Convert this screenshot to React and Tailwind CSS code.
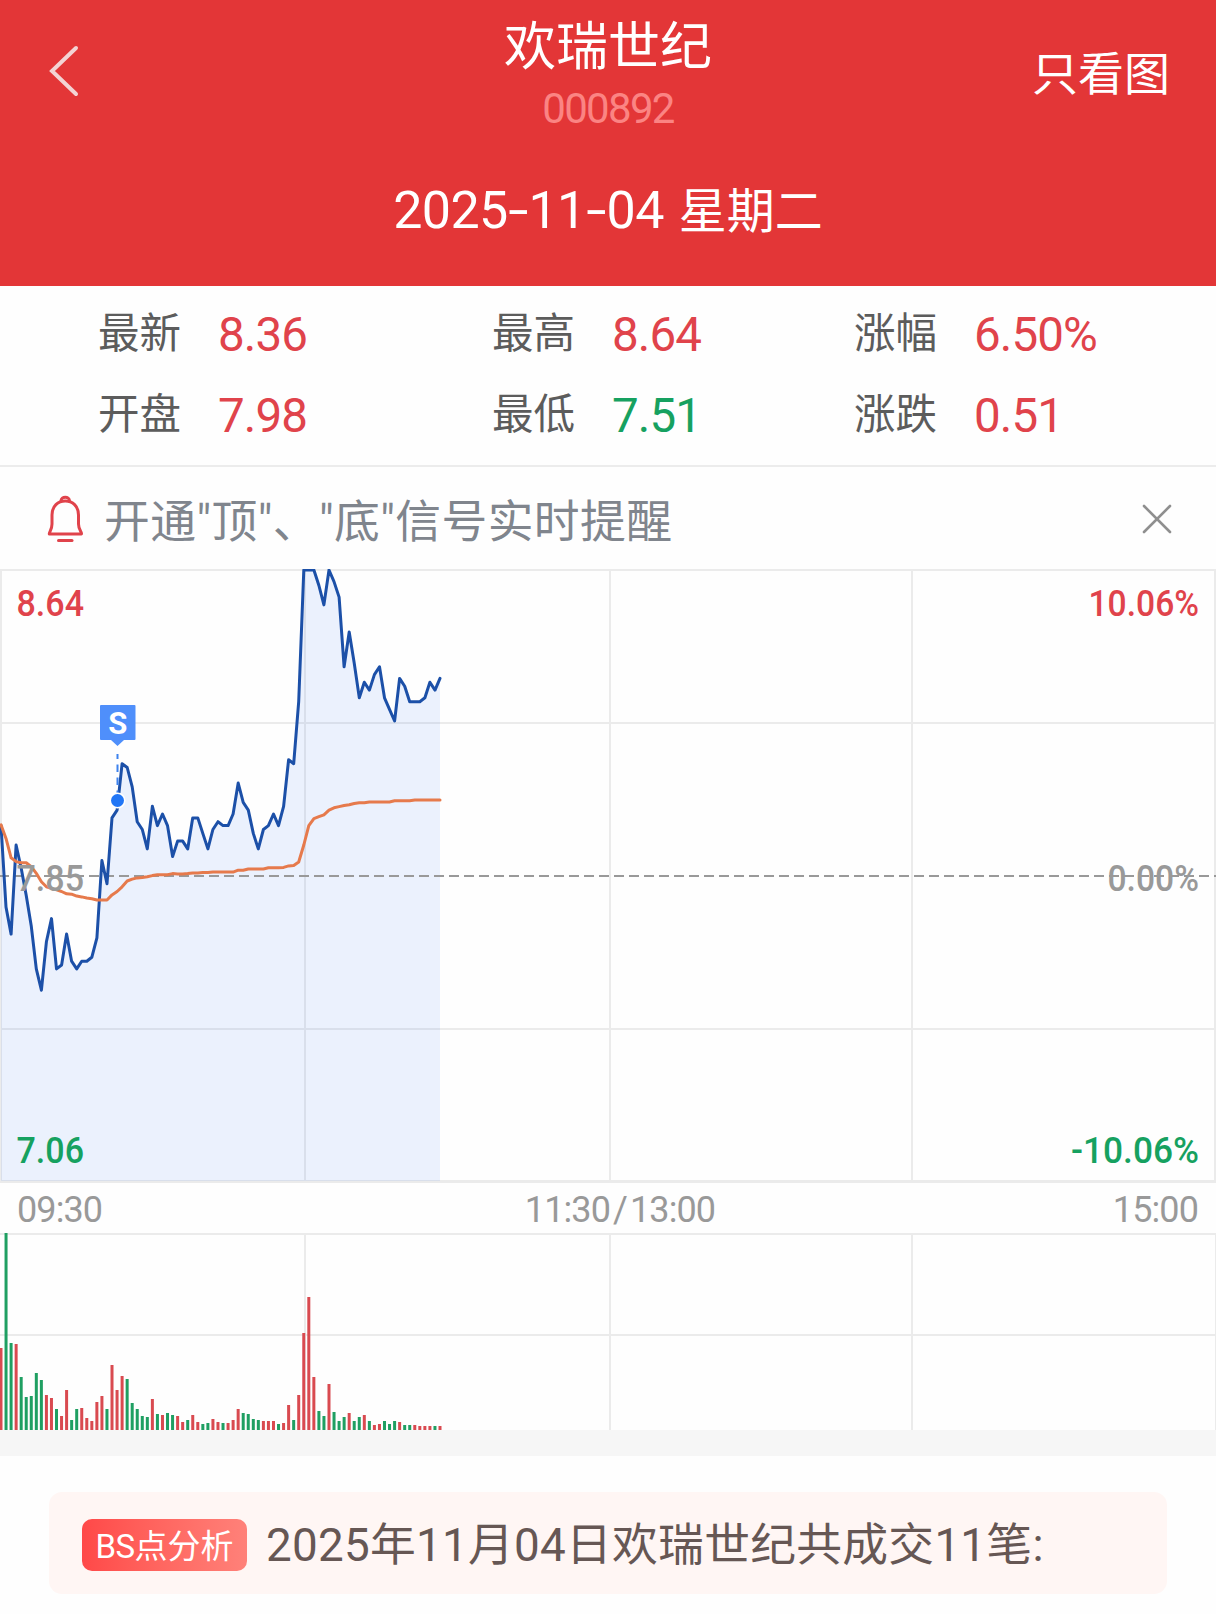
import React from "react";

const RED = "#e0434b";
const GREEN = "#16a160";
const GRID = "#ebebeb";

// Minute prices in cents, starting at 09:30
const prices = [
    798, 777, 770, 793, 787, 780, 772, 761, 755.5, 768, 774, 761, 762, 770, 763, 761, 763, 763, 764, 769, 789, 783,
    800, 802, 814, 813, 808, 799, 797, 792, 803, 798, 801, 798, 790, 794, 794, 792, 800, 800, 796, 792, 797, 799,
    798, 798, 801, 809, 804, 802, 796, 792, 797, 798, 801, 798, 803, 815, 814, 830, 864, 864, 864, 860, 855, 864,
    861, 857, 839, 848, 840, 831, 835, 833, 837, 839, 831, 828, 825, 836, 834, 830, 830, 830, 831, 835, 833, 836,
];

const averages = [
    798.2, 794.7, 789.7, 788.7, 788.4, 788.4, 787.4, 785.7, 783.5, 782.2, 781.8, 781.4, 781, 780.4, 780.3, 779.8,
    779.6, 779.3, 779.1, 778.8, 778.8, 778.8, 780.1, 781, 782.2, 783.7, 784.2, 784.5, 784.6, 784.8, 785.1, 785.3,
    785.3, 785.3, 785.6, 785.5, 785.5, 785.6, 785.8, 785.8, 785.9, 785.9, 786, 786, 786, 786, 786, 786.5, 786.5,
    786.8, 786.8, 786.8, 786.8, 787.1, 787.1, 787.1, 787.2, 787.6, 787.7, 788.6, 793, 798, 799.8, 800.3, 800.8,
    802, 802.6, 802.9, 803.2, 803.4, 803.7, 803.9, 803.9, 804.1, 804.1, 804.1, 804.1, 804.1, 804.4, 804.4, 804.4,
    804.4, 804.6, 804.6, 804.6, 804.6, 804.6, 804.6,
];

// Negative values are minutes that closed lower
const volumes = [
    82, -197, -87, 86, -53, -33, -34, -57, -50, 35, 32, -21, 14, 40, -10, -21, 22, 12, 9, 28, 34, -21, 65, 40, 54,
    -51, -27, -21, -14, -13, 31, -16, 15, -17, -15, 14, 8, -10, 15, 8, -6, -7, 11, 8, -7, 7, 10, 21, -17, -16, -11,
    -10, 9, 9, 9, -6, 7, 25, -10, 35, 97, 133, 53, -19, -14, 46, -18, -9, -13, 17, -9, -13, 15, -9, 5, 6, -9, -6,
    -9, 8, -5, -5, 5, 4, 4, 4, -4, 4,
];

const stats = [
    [
        { label: "最新", value: "8.36" },
        { label: "开盘", value: "7.98" },
    ],
    [
        { label: "最高", value: "8.64" },
        { label: "最低", value: "7.51", down: true },
    ],
    [
        { label: "涨幅", value: "6.50%" },
        { label: "涨跌", value: "0.51" },
    ],
];

const toX = (i) => 1 + i * 5.046;
const toY = (cents) => 1 + (864 - cents) * 3.873;
const toPoints = (list) => list.map((v, i) => `${toX(i).toFixed(1)},${toY(v).toFixed(1)}`).join(" ");

const Dash = () => <span className="mx-[3.5px] inline-block scale-x-[1.4]">-</span>;

const Header = () => (
    <header className="h-[286px] bg-[#e33637] text-white">
        <div className="flex h-[144px] justify-between">
            <div className="w-[280px] pl-[46px] pt-[43px]">
                <svg width="36" height="56" viewBox="0 0 36 56" fill="none">
                    <path d="M30 5 L6 28 L30 51" stroke="#f3d3d3" strokeWidth="4" strokeLinecap="round" />
                </svg>
            </div>
            <div className="flex flex-col items-center pt-[18px]">
                <h1 className="text-[52px] leading-[60px]">欢瑞世纪</h1>
                <span className="mt-[7px] text-[42px] leading-[48px] tracking-[-1.7px] text-[#fb8483]">000892</span>
            </div>
            <div className="w-[280px] pr-[46px] pt-[44px] text-right text-[46px] leading-[60px]">只看图</div>
        </div>
        <div className="flex items-baseline justify-center pt-[31px] leading-[72px]">
            <span className="text-[52px] tracking-[-0.6px]">
                2025
                <Dash />
                11
                <Dash />
                04
            </span>
            <span className="ml-[15px] text-[48px]">星期二</span>
        </div>
    </header>
);

const Stats = () => (
    <section className="flex h-[181px] border-b-2 border-[#ececec] pl-[98px] pt-[8px]">
        {stats.map((col, i) => (
            <div key={i} className={i === 0 ? "w-[394px]" : "w-[362px]"}>
                {col.map((s) => (
                    <div key={s.label} className="flex h-[81px] items-center">
                        <span className="w-[120px] text-[41.5px] text-[#5c5c5c]">{s.label}</span>
                        <span
                            className={`pt-[2px] text-[47.5px] tracking-[-0.9px] ${
                                s.down ? "text-[#16a160]" : "text-[#e0434b]"
                            }`}
                        >
                            {s.value}
                        </span>
                    </div>
                ))}
            </div>
        ))}
    </section>
);

const AlertBar = () => (
    <section className="flex h-[102px] items-center justify-between pl-[46px] pr-[43px] pt-[2px]">
        <div className="flex items-center">
            <svg width="40" height="48" viewBox="0 0 40 48" fill="none" stroke={RED} strokeWidth="3" strokeLinecap="round" strokeLinejoin="round">
                <path d="M15 6 C15 1 23.500 1 23.500 6" />
                <path d="M3.300 39 C3 37 6 35 6 29 L6 20 C6 11 12 6 19.300 6 C26.500 6 32.500 11 32.500 20 L32.500 29 C32.500 35 36 37 35.500 39 Z" />
                <path d="M12.500 45.500 H26" />
            </svg>
            <span className="ml-[18px] pt-[7px] text-[45.8px] leading-[60px] tracking-[0.4px] text-[#80858d]">
                开通"顶"、"底"信号实时提醒
            </span>
        </div>
        <svg width="32" height="32" viewBox="0 0 32 32" fill="none" stroke="#8f8f8f" strokeWidth="2.600" strokeLinecap="round">
            <path d="M3 3 L29 29 M29 3 L3 29" />
        </svg>
    </section>
);

const ChartLabel = ({ x, y, width, color, children }) => (
    <text x={x} y={y} textLength={width} lengthAdjust="spacingAndGlyphs" fill={color} fontSize="36" fontWeight="500">
        {children}
    </text>
);

const PriceChart = () => {
    const line = toPoints(prices);
    return (
        <svg width="1216" height="614" viewBox="0 0 1216 614" className="block">
            <g stroke={GRID} strokeWidth="2">
                <path d="M0 1 H1216 M0 154 H1216 M0 460 H1216" />
                <path d="M1 0 V613 M305 0 V613 M610 0 V613 M912 0 V613 M1215 0 V613" />
                <path d="M0 612.500 H1216" strokeWidth="3" />
            </g>
            <polygon points={`1,612 ${line} 440,612`} fill="#2c6ef2" fillOpacity="0.09" />
            <path d="M-1 307 H1216" stroke="#999" strokeWidth="2" strokeDasharray="10 5" />
            <polyline points={line} fill="none" stroke="#1c50a8" strokeWidth="3" strokeLinejoin="round" strokeLinecap="round" />
            <polyline points={toPoints(averages)} fill="none" stroke="#e67a4c" strokeWidth="3" strokeLinejoin="round" strokeLinecap="round" />

            {/* Sell marker */}
            <path d="M117.500 185 V226" stroke="#3d82ee" strokeWidth="2" strokeDasharray="7.500 5.500" strokeDashoffset="2.500" />
            <circle cx="117.500" cy="231.500" r="8" fill="#fff" />
            <circle cx="117.500" cy="231.500" r="6.500" fill="#2176f6" />
            <path d="M101 136 H134.500 Q135.500 136 135.500 137 V170 Q135.500 171 134.500 171 H124 L117.500 177 L111 171 H101 Q100 171 100 170 V137 Q100 136 101 136 Z" fill="#4f8ffb" />
            <text x="117.700" y="164.500" textAnchor="middle" fill="#fff" fontSize="31" fontWeight="700">
                S
            </text>

            <ChartLabel x={16.5} y={47} width={67.5} color={RED}>8.64</ChartLabel>
            <ChartLabel x={16.5} y={322} width={67.5} color="#999">7.85</ChartLabel>
            <ChartLabel x={16.5} y={594} width={67.5} color={GREEN}>7.06</ChartLabel>
            <ChartLabel x={1088.5} y={47} width={110.5} color={RED}>10.06%</ChartLabel>
            <ChartLabel x={1107.5} y={322} width={91.5} color="#999">0.00%</ChartLabel>
            <ChartLabel x={1071} y={594} width={128} color={GREEN}>-10.06%</ChartLabel>
        </svg>
    );
};

const TimeAxis = () => (
    <div className="grid h-[50px] grid-cols-3 items-center px-[17px] pt-[2px] text-[36px] leading-[50px] tracking-[-0.9px] text-[#999]">
        <span>09:30</span>
        <span className="pl-[24px] text-center">
            11:30<span className="mx-[3px]">/</span>13:00
        </span>
        <span className="pr-px text-right">15:00</span>
    </div>
);

const VolumeChart = () => (
    <svg width="1216" height="197" viewBox="0 0 1216 197" className="block">
        <g stroke={GRID} strokeWidth="2">
            <path d="M0 1 H1216 M0 102 H1216" />
            <path d="M305 0 V197 M610 0 V197 M912 0 V197 M1216 0 V197" />
        </g>
        {volumes.map((v, i) => (
            <rect
                key={i}
                x={toX(i) - 1.5}
                y={197 - Math.abs(v)}
                width="3"
                height={Math.abs(v)}
                fill={v < 0 ? "#1f9f62" : "#d94a50"}
            />
        ))}
    </svg>
);

const Analysis = () => (
    <section className="px-[49px] pt-[36px]">
        <div className="flex h-[102px] items-center rounded-[13px] bg-[#fff6f4] pl-[33px]">
            <span className="mt-[4px] flex h-[52px] w-[165px] items-center justify-center rounded-[10px] bg-linear-to-r from-[#ff4848] to-[#ff8179] pt-[4px] text-[33px] text-white">
                <span className="tracking-[-0.5px]">BS</span>点分析
            </span>
            <p className="ml-[19px] whitespace-nowrap pt-[6px] text-[45.8px] leading-[60px] tracking-[0.25px] text-[#665754]">
                2025年11月04日欢瑞世纪共成交11笔:
            </p>
        </div>
    </section>
);

const App = () => {
    return (
        <div className="h-[1614px] w-[1216px] overflow-hidden bg-[#fefefe] font-[Roboto,'Noto_Sans_CJK_SC',sans-serif]">
            <Header />
            <Stats />
            <AlertBar />
            <PriceChart />
            <TimeAxis />
            <VolumeChart />
            <div className="h-[26px] bg-[#f6f6f6]" />
            <Analysis />
        </div>
    );
};

export default App;
